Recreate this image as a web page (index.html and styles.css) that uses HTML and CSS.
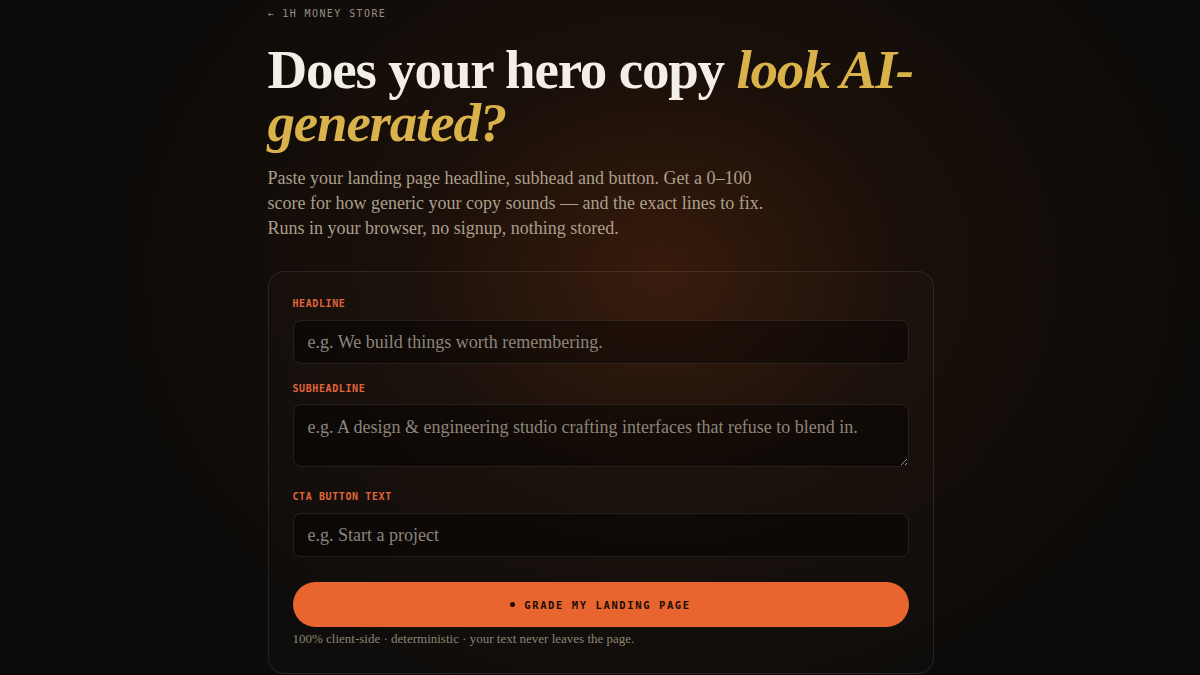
FILE: index.html
```html
<!DOCTYPE html>
<html lang="en">
<head>
<meta charset="utf-8">
<title>AI copy grader</title>
<link rel="stylesheet" href="styles.css">
</head>
<body>
<main class="page">
  <a class="back" href="#">← 1H MONEY STORE</a>
  <h1 class="title">Does your hero copy <em>look AI-generated?</em></h1>
  <p class="lede">Paste your landing page headline, subhead and button. Get a 0–100 score for how generic your copy sounds — and the exact lines to fix. Runs in your browser, no signup, nothing stored.</p>
  <form class="card">
    <div class="field">
      <label class="label" for="h">HEADLINE</label>
      <input class="input" id="h" type="text" placeholder="e.g. We build things worth remembering.">
    </div>
    <div class="field field-area">
      <label class="label" for="s">SUBHEADLINE</label>
      <textarea class="input area" id="s" placeholder="e.g. A design &amp; engineering studio crafting interfaces that refuse to blend in."></textarea>
    </div>
    <div class="field field-last">
      <label class="label" for="c">CTA BUTTON TEXT</label>
      <input class="input" id="c" type="text" placeholder="e.g. Start a project">
    </div>
    <button class="btn" type="button"><span class="dot"></span>GRADE MY LANDING PAGE</button>
    <p class="note">100% client-side · deterministic · your text never leaves the page.</p>
  </form>
</main>
</body>
</html>
```
FILE: styles.css
```css
html, body {
  margin: 0;
  padding: 0;
  height: 100%;
}
body {
  background-color: #0d0b09;
  background-image: radial-gradient(ellipse 540px 440px at 660px 270px, rgba(72, 33, 12, 0.72) 0%, rgba(42, 21, 10, 0.45) 45%, rgba(13, 11, 9, 0) 100%);
  background-repeat: no-repeat;
  color: #efe9df;
  font-family: "Liberation Serif", "DejaVu Serif", serif;
  overflow: hidden;
}
.page {
  width: 666px;
  margin: 0 auto;
  padding-top: 8px;
  padding-left: 1px;
}
.back {
  display: block;
  font-family: "DejaVu Sans Mono", "Liberation Mono", monospace;
  font-size: 10px;
  letter-spacing: 1.4px;
  line-height: 12px;
  color: #978e82;
  text-decoration: none;
}
.title {
  margin: 23px 0 0;
  font-size: 55px;
  line-height: 53px;
  font-weight: 700;
  letter-spacing: -1.2px;
  color: #f3eee6;
}
.title em {
  color: #d9b24c;
  font-style: italic;
}
.lede {
  margin: 17px 0 0;
  width: 510px;
  font-size: 18px;
  line-height: 25px;
  color: #ab9f8c;
}
.card {
  margin-top: 30px;
  box-sizing: border-box;
  width: 666px;
  border: 1px solid rgba(255, 255, 255, 0.09);
  border-radius: 16px;
  background: rgba(255, 240, 220, 0.012);
  padding: 26px 24px 26px;
}
.field {
  margin-bottom: 19px;
}
.field-area {
  margin-bottom: 24px;
}
.field-last {
  margin-bottom: 25px;
}
.label {
  display: block;
  font-family: "DejaVu Sans Mono", "Liberation Mono", monospace;
  font-size: 10px;
  font-weight: 700;
  line-height: 12px;
  letter-spacing: 0.6px;
  color: #e0653a;
  margin-bottom: 10px;
}
.field-area .label {
  margin-bottom: 9px;
}
.input {
  display: block;
  box-sizing: border-box;
  width: 100%;
  height: 44px;
  margin: 0;
  padding: 0 14px;
  border: 1px solid rgba(255, 255, 255, 0.09);
  border-radius: 8px;
  background: rgba(0, 0, 0, 0.38);
  color: #efe9df;
  font-family: "Liberation Serif", "DejaVu Serif", serif;
  font-size: 18px;
  outline: none;
}
.input::placeholder {
  color: #8c857a;
}
.area {
  height: 63px;
  padding: 11px 14px;
  resize: vertical;
  line-height: 22px;
}
.btn {
  display: flex;
  align-items: center;
  justify-content: center;
  gap: 9px;
  width: 100%;
  height: 45px;
  border: 0;
  border-radius: 23px;
  background: #e8652f;
  color: #1a0c06;
  font-family: "DejaVu Sans Mono", "Liberation Mono", monospace;
  font-size: 10.5px;
  font-weight: 700;
  letter-spacing: 1.6px;
  cursor: pointer;
}
.dot {
  width: 5px;
  height: 5px;
  border-radius: 50%;
  background: #1a0c06;
}
.note {
  margin: 4px 0 0;
  font-size: 13px;
  line-height: 16px;
  color: #8d8474;
}
```
